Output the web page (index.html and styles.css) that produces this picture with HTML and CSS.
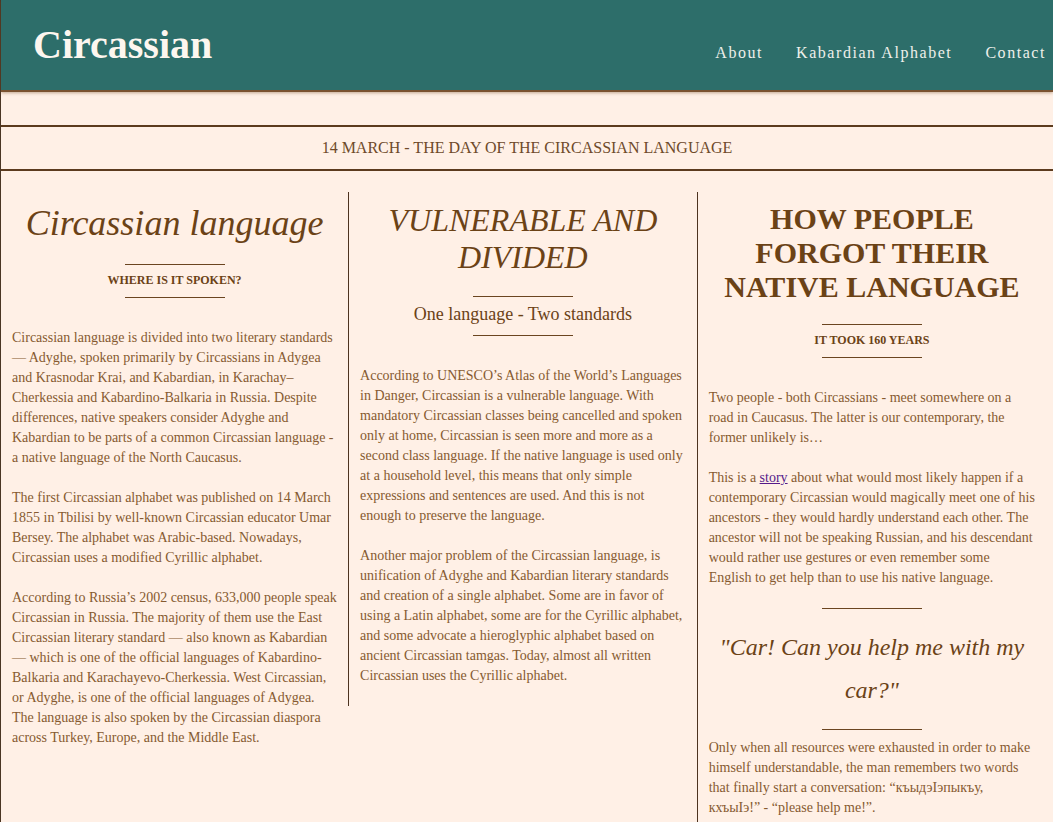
FILE: index.html
```html
<!DOCTYPE html>
<html lang="en">
<head>
<meta charset="utf-8">
<title>Circassian</title>
<link rel="stylesheet" href="styles.css">
</head>
<body>
<div class="page">
  <header class="site-header">
    <div class="logo">Circassian</div>
    <nav class="nav">
      <a href="#">About</a>
      <a href="#">Kabardian Alphabet</a>
      <a href="#">Contact</a>
    </nav>
  </header>

  <div class="date-band">14 MARCH - THE DAY OF THE CIRCASSIAN LANGUAGE</div>

  <main class="columns">
    <section class="col col-first">
      <h2 class="title-italic">Circassian language</h2>
      <div class="rule"></div>
      <div class="sub sub-caps">WHERE IS IT SPOKEN?</div>
      <div class="rule"></div>
      <p class="first">Circassian language is divided into two literary standards — Adyghe, spoken primarily by Circassians in Adygea and Krasnodar Krai, and Kabardian, in Karachay–Cherkessia and Kabardino-Balkaria in Russia. Despite differences, native speakers consider Adyghe and Kabardian to be parts of a common Circassian language - a native language of the North Caucasus.</p>
      <p>The first Circassian alphabet was published on 14 March 1855 in Tbilisi by well-known Circassian educator Umar Bersey. The alphabet was Arabic-based. Nowadays, Circassian uses a modified Cyrillic alphabet.</p>
      <p>According to Russia’s 2002 census, 633,000 people speak Circassian in Russia. The majority of them use the East Circassian literary standard — also known as Kabardian — which is one of the official languages of Kabardino-Balkaria and Karachayevo-Cherkessia. West Circassian, or Adyghe, is one of the official languages of Adygea. The language is also spoken by the Circassian diaspora across Turkey, Europe, and the Middle East.</p>
    </section>

    <section class="col col-bordered col-middle">
      <h2 class="title-caps-italic">VULNERABLE AND DIVIDED</h2>
      <div class="rule"></div>
      <div class="sub sub-large">One language - Two standards</div>
      <div class="rule"></div>
      <p class="first">According to UNESCO’s Atlas of the World’s Languages in Danger, Circassian is a vulnerable language. With mandatory Circassian classes being cancelled and spoken only at home, Circassian is seen more and more as a second class language. If the native language is used only at a household level, this means that only simple expressions and sentences are used. And this is not enough to preserve the language.</p>
      <p>Another major problem of the Circassian language, is unification of Adyghe and Kabardian literary standards and creation of a single alphabet. Some are in favor of using a Latin alphabet, some are for the Cyrillic alphabet, and some advocate a hieroglyphic alphabet based on ancient Circassian tamgas. Today, almost all written Circassian uses the Cyrillic alphabet.</p>
    </section>

    <section class="col col-bordered col-last">
      <h2 class="title-bold">HOW PEOPLE FORGOT THEIR NATIVE LANGUAGE</h2>
      <div class="rule"></div>
      <div class="sub sub-caps">IT TOOK 160 YEARS</div>
      <div class="rule"></div>
      <p class="first">Two people - both Circassians - meet somewhere on a road in Caucasus. The latter is our contemporary, the former unlikely is…</p>
      <p>This is a <a class="story" href="#">story</a> about what would most likely happen if a contemporary Circassian would magically meet one of his ancestors - they would hardly understand each other. The ancestor will not be speaking Russian, and his descendant would rather use gestures or even remember some English to get help than to use his native language.</p>
      <div class="rule rule-gap"></div>
      <blockquote class="quote">"Car! Can you help me with my car?"</blockquote>
      <div class="rule"></div>
      <p class="after-quote">Only when all resources were exhausted in order to make himself understandable, the man remembers two words that finally start a conversation: “къыдэIэпыкъу, кхъыIэ!” - “please help me!”.</p>
    </section>
  </main>
</div>
</body>
</html>
```

FILE: styles.css
```css
html, body {
  margin: 0;
  padding: 0;
  background: #fff0e6;
}

body {
  font-family: "Liberation Serif", "Times New Roman", serif;
  color: #865a30;
}

.page {
  border-left: 1px solid #4a3523;
  min-height: 822px;
}

.site-header {
  height: 92px;
  box-sizing: border-box;
  background: #2d6e6a;
  border-bottom: 2px solid #7a5230;
  box-shadow: 0 1px 3px rgba(120, 80, 40, 0.45);
  display: flex;
  align-items: baseline;
  justify-content: space-between;
  padding: 21px 0 0 32px;
}

.logo {
  font-size: 40px;
  font-weight: bold;
  color: #fdf6ef;
}

.nav {
  display: flex;
  gap: 33px;
  padding-right: 7px;
}

.nav a {
  color: #eef0ea;
  text-decoration: none;
  font-size: 16px;
  letter-spacing: 1.55px;
}

.date-band {
  margin-top: 33px;
  border-top: 2px solid #5c3b1e;
  border-bottom: 2px solid #5c3b1e;
  text-align: center;
  font-size: 16px;
  line-height: 18px;
  padding: 12px 0;
  color: #6e4a2a;
}

.columns {
  display: flex;
  align-items: flex-start;
  margin-top: 21px;
}

.col {
  flex: 0 0 auto;
  box-sizing: content-box;
  padding: 0 11px;
  text-align: left;
}

.col-first {
  width: 30.9%;
}

.col-middle {
  width: 30.95%;
}

.col-last {
  width: 31.04%;
}

.col-bordered {
  border-left: 1px solid #4d3320;
}

h2 {
  margin: 11px 0 0;
  text-align: center;
  color: #6b4216;
}

.title-italic {
  font-size: 36px;
  font-style: italic;
  font-weight: normal;
  line-height: 41px;
}

.title-caps-italic {
  margin-top: 10px;
  font-size: 32px;
  font-style: italic;
  font-weight: normal;
  line-height: 37px;
}

.title-bold {
  margin-top: 10px;
  font-size: 30px;
  font-weight: bold;
  line-height: 34px;
}

.rule {
  width: 100px;
  height: 1px;
  background: #6b4520;
  margin: 20px auto 0;
}

.sub {
  text-align: center;
  color: #6b4216;
  margin: 8px 0 10px;
}

.sub-caps {
  font-size: 12px;
  font-weight: bold;
  line-height: 14px;
}

.sub-large {
  font-size: 18px;
  line-height: 21px;
  margin: 7px 0 10px;
}

.sub + .rule {
  margin-top: 0;
}

p {
  font-size: 14px;
  line-height: 20px;
  margin: 20px 0;
}

p.first {
  margin-top: 30px;
}

.story {
  color: #551a8b;
}

.rule-gap {
  margin-top: 0;
}

.quote {
  margin: 17px 0;
  text-align: center;
  font-style: italic;
  font-size: 24px;
  line-height: 43px;
  color: #6b4216;
}

.quote + .rule {
  margin-top: 0;
}

p.after-quote {
  margin-top: 8px;
}
```
